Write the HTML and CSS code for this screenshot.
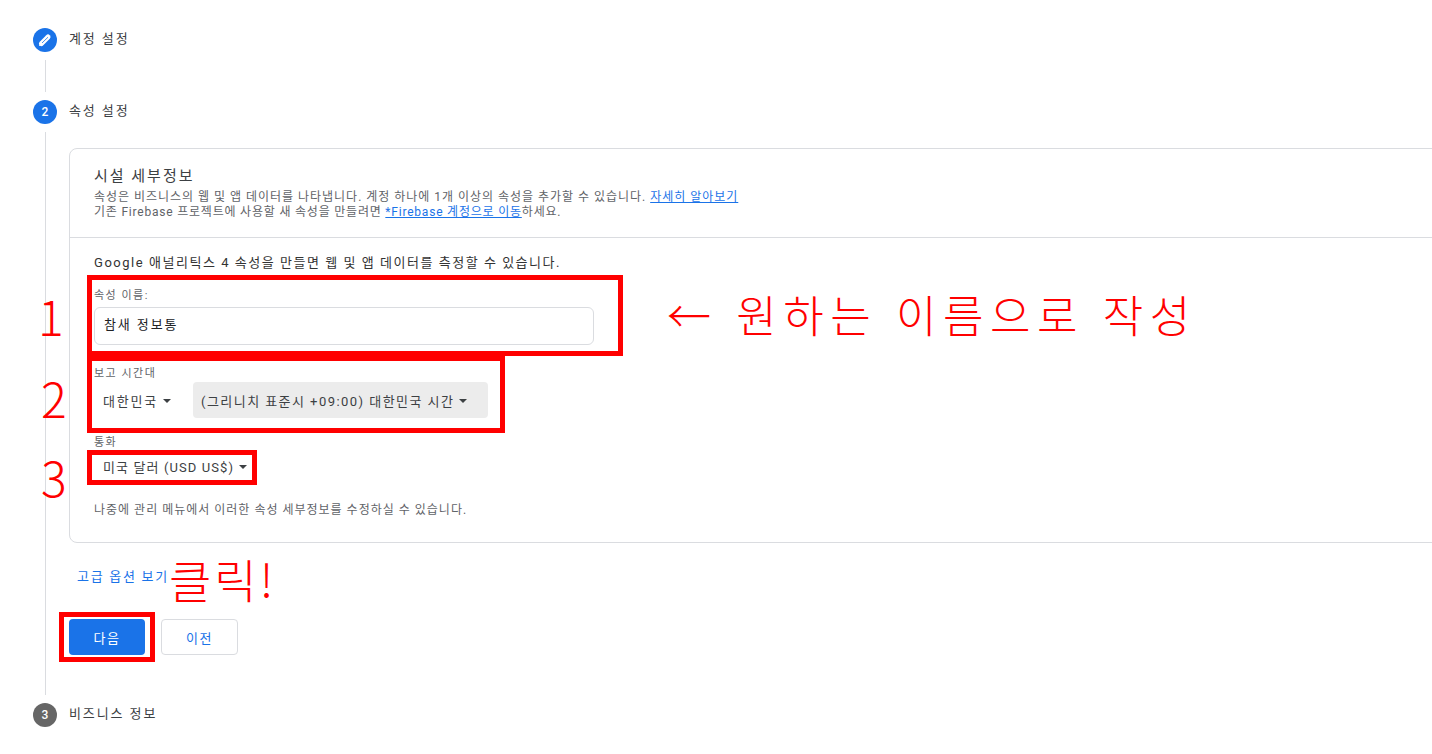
FILE: index.html
```html
<!DOCTYPE html>
<html lang="ko">
<head>
    <meta charset="UTF-8">
    <title>속성 설정</title>
    <link rel="stylesheet" href="styles.css">
</head>
<body>

    <div class="step step-first">
        <span class="circle">
            <svg width="24" height="24" viewBox="0 0 24 24"><path d="M8.5 15.5 L15 9" stroke="#fff" stroke-width="5" stroke-linecap="round"/><path d="M6 18 L7 14 L10 17 Z" fill="#fff"/><path d="M9 15 L15 9.2" stroke="#1a73e8" stroke-width="0.8"/></svg>
        </span>
        <span class="step-title">계정 설정</span>
    </div>
    <div class="line line-short"></div>

    <div class="step">
        <span class="circle">2</span>
        <span class="step-title">속성 설정</span>
    </div>

    <div class="step-body">
        <div class="card">
            <div class="card-head">
                <h3>시설 세부정보</h3>
                <p>속성은 비즈니스의 웹 및 앱 데이터를 나타냅니다. 계정 하나에 1개 이상의 속성을 추가할 수 있습니다. <a href="#">자세히 알아보기</a></p>
                <p>기존 Firebase 프로젝트에 사용할 새 속성을 만들려면 <a href="#">*Firebase 계정으로 이동</a>하세요.</p>
            </div>
            <div class="card-main">
                <p class="intro">Google 애널리틱스 4 속성을 만들면 웹 및 앱 데이터를 측정할 수 있습니다.</p>

                <label class="field-label label-name">속성 이름:</label>
                <div class="text-input">참새 정보통</div>

                <label class="field-label label-zone">보고 시간대</label>
                <div class="select-row">
                    <span class="select select-country">대한민국<i class="caret"></i></span>
                    <span class="select select-zone">(그리니치 표준시 +09:00) 대한민국 시간<i class="caret"></i></span>
                </div>

                <label class="field-label label-money">통화</label>
                <div class="select-row">
                    <span class="select select-money">미국 달러 (USD US$)<i class="caret"></i></span>
                </div>

                <p class="note">나중에 관리 메뉴에서 이러한 속성 세부정보를 수정하실 수 있습니다.</p>
            </div>
        </div>

        <a class="advanced" href="#">고급 옵션 보기</a>

        <div class="buttons">
            <button class="btn btn-next">다음</button>
            <button class="btn btn-prev">이전</button>
        </div>
    </div>

    <div class="step">
        <span class="circle circle-grey">3</span>
        <span class="step-title">비즈니스 정보</span>
    </div>

    <!-- 빨간 표시 -->
    <div class="mark box-1"></div>
    <div class="mark box-2"></div>
    <div class="mark box-3"></div>
    <div class="mark box-4"></div>
    <span class="note-num num-1">1</span>
    <span class="note-num num-2">2</span>
    <span class="note-num num-3">3</span>
    <span class="note-text note-name">← 원하는 이름으로 작성</span>
    <span class="note-text note-click">클릭!</span>

</body>
</html>
```

FILE: styles.css
```css
html, body {
    overflow: hidden;
}
body {
    font-family: Roboto, "Noto Sans CJK KR", sans-serif;
    margin: 0;
    height: 754px;
    width: 1432px;
    background-color: #fff;
    color: #3c4043;
    font-size: 12px;
    position: relative;
}
a {
    color: #1a73e8;
}
.step {
    display: flex;
    align-items: center;
    gap: 12px;
    height: 24px;
    padding-left: 33px;
}
.step-first {
    padding-top: 28px;
}
.circle {
    width: 24px;
    height: 24px;
    border-radius: 50%;
    background-color: #1a73e8;
    color: #fff;
    font-size: 12px;
    font-weight: 500;
    display: flex;
    align-items: center;
    justify-content: center;
}
.circle-grey {
    background-color: #666;
}
.step-title {
    font-size: 13px;
    letter-spacing: 1.9px;
    position: relative;
    top: -3px;
    color: #3c4043;
}
.line {
    width: 1px;
    background-color: #dadce0;
    margin-left: 45px;
}
.line-short {
    height: 32px;
    margin-top: 8px;
    margin-bottom: 8px;
}
.step-body {
    margin-left: 45px;
    margin-top: 8px;
    margin-bottom: 8px;
    height: 563px;
    border-left: 1px solid #dadce0;
    padding-left: 23px;
    padding-top: 16px;
    box-sizing: border-box;
}
.card {
    width: 1400px;
    height: 395px;
    border: 1px solid #dadce0;
    border-radius: 8px;
    box-sizing: border-box;
}
.card-head {
    height: 89px;
    box-sizing: border-box;
    border-bottom: 1px solid #dadce0;
    padding: 17px 24px 0;
}
.card-head h3 {
    margin: 0 0 4px;
    font-size: 15px;
    font-weight: 400;
    line-height: 20px;
    letter-spacing: 2px;
    color: #3c4043;
}
.card-head p {
    margin: 0;
    font-size: 12px;
    line-height: 15px;
    color: #5f6368;
    letter-spacing: 0.98px;
}
.card-head p + p {
    letter-spacing: 0.79px;
}
.card-main {
    padding: 15px 24px 0;
}
.intro {
    margin: 0;
    font-size: 13px;
    line-height: 20px;
    letter-spacing: 1.53px;
    color: #333;
}
.field-label {
    display: block;
    font-size: 11px;
    line-height: 14px;
    letter-spacing: 1.5px;
    color: #5f6368;
}
.label-name {
    margin-top: 16px;
}
.text-input {
    width: 500px;
    height: 38px;
    margin-top: 4px;
    border: 1px solid #dadce0;
    border-radius: 6px;
    box-sizing: border-box;
    padding-left: 9px;
    line-height: 34px;
    font-size: 13px;
    letter-spacing: 1.9px;
    color: #202124;
}
.label-zone {
    margin-top: 22px;
}
.select-row {
    display: flex;
    gap: 11px;
    margin-top: 1px;
}
.select {
    display: inline-flex;
    align-items: center;
    height: 36px;
    box-sizing: border-box;
    padding: 0 9px;
    font-size: 13px;
    color: #3c4043;
    border-radius: 4px;
}
.select-country {
    width: 88px;
    letter-spacing: 1.75px;
}
.select-zone {
    width: 295px;
    padding-left: 8px;
    letter-spacing: 1.45px;
    background-color: #ececec;
}
.select-money {
    height: 30px;
    letter-spacing: 1.1px;
}
.caret {
    width: 0;
    height: 0;
    margin-left: 5px;
    margin-top: 2px;
    border-left: 4px solid transparent;
    border-right: 4px solid transparent;
    border-top: 4px solid #3c4043;
}
.label-money {
    margin-top: 18px;
}
.label-money + .select-row {
    margin-top: 1px;
}
.note {
    margin: 21px 0 0;
    font-size: 12px;
    line-height: 16px;
    letter-spacing: 1px;
    color: #5f6368;
}
.advanced {
    display: block;
    margin: 26px 0 0 8px;
    font-size: 13px;
    line-height: 16px;
    letter-spacing: 1.7px;
    text-decoration: none;
}
.buttons {
    display: flex;
    gap: 16px;
    margin-top: 34px;
}
.btn {
    height: 36px;
    border-radius: 4px;
    font-family: inherit;
    font-size: 13px;
    letter-spacing: 1.5px;
    cursor: pointer;
}
.btn-next {
    width: 76px;
    background-color: #1a73e8;
    color: #fff;
    border: none;
}
.btn-prev {
    width: 77px;
    background-color: #fff;
    color: #1a73e8;
    border: 1px solid #dadce0;
}
/* 빨간 표시는 화면 위에 얹는다 */
.mark {
    position: absolute;
    border: 5px solid #f00;
    box-sizing: border-box;
}
.box-1 {
    left: 87px;
    top: 275px;
    width: 536px;
    height: 81px;
}
.box-2 {
    left: 87px;
    top: 356px;
    width: 418px;
    height: 77px;
}
.box-3 {
    left: 87px;
    top: 450px;
    width: 170px;
    height: 35px;
}
.box-4 {
    left: 59px;
    top: 612px;
    width: 96px;
    height: 50px;
}
.note-num, .note-text {
    position: absolute;
    color: #f00;
    font-family: "Noto Sans CJK KR", sans-serif;
    font-weight: 300;
    white-space: nowrap;
}
.note-num {
    font-size: 48px;
    line-height: 48px;
    left: 40px;
}
.num-1 { top: 291px; left: 38px; }
.num-2 { top: 373px; left: 41px; }
.num-3 { top: 452px; left: 41px; }
.note-name {
    left: 667px;
    top: 284px;
    font-size: 44px;
    line-height: 60px;
    letter-spacing: 6.5px;
}
.note-click {
    left: 169px;
    top: 552px;
    font-size: 46px;
    line-height: 52px;
    letter-spacing: 3px;
}
```
